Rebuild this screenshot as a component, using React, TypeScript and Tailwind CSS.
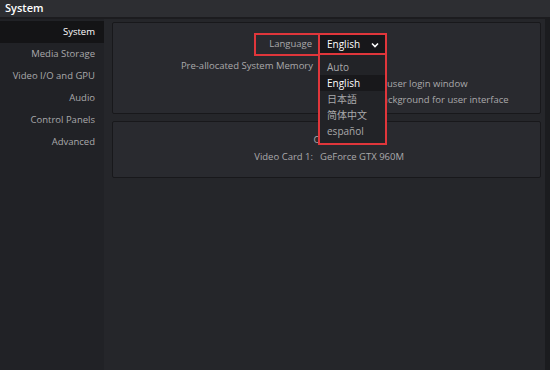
const menu = ['System', 'Media Storage', 'Video I/O and GPU', 'Audio', 'Control Panels', 'Advanced'];
const languages = ['Auto', 'English', '日本語', '简体中文', 'español'];

const font = { fontFamily: '"Open Sans", "Noto Sans CJK SC", sans-serif' };

export default function App() {
  return (
    <div
      className="w-[550px] h-[370px] bg-[#25262a] flex flex-col overflow-hidden text-[9.5px] text-[#a9a9ab]"
      style={font}
    >
      <div className="h-[19px] shrink-0 bg-[#2d2e32] px-[5px] flex items-center text-[11px] font-semibold text-white border-b-2 border-[#1c1c1f]">
        System
      </div>
      <div className="flex flex-1">
        <div className="w-[104px] shrink-0 bg-[#212226] pt-[2px] flex flex-col">
          {menu.map((m, i) => (
            <div
              key={m}
              className={
                'h-[22px] pr-[9px] flex items-center justify-end text-[9.5px] ' +
                (i === 0 ? 'bg-[#141416] text-white' : '')
              }
            >
              {m}
            </div>
          ))}
        </div>
        <div className="flex-1 flex">
          <div className="flex-1 pl-[8px] pr-[4px] pt-[3px] flex flex-col gap-[7px]">
            <div className="relative h-[92px] bg-[#292a2f] border border-[#18181b] rounded-[2px] pt-[10px]">
              <div className="flex items-center h-[23px] pl-[141px]">
                <div className="h-[23px] w-[133px] border-2 border-[#e0363b] flex items-center">
                  <span className="flex-1 text-right pr-[6px]">Language</span>
                  <div className="h-[23px] w-[69px] -mr-[2px] border-2 border-[#e0363b] bg-[#17171a] flex items-center pl-[7px] pr-[6px] text-white text-[10px]">
                    <span className="flex-1">English</span>
                    <svg width="8" height="6" viewBox="0 0 8 6" fill="none" stroke="#fff" strokeWidth="1.6">
                      <path d="M1 1.5 L4 4.5 L7 1.5" />
                    </svg>
                  </div>
                </div>
              </div>
              <div className="flex items-center h-[20px]">
                <div className="w-[200px] text-right">Pre-allocated System Memory</div>
              </div>
              <div className="flex items-center h-[16px]">
                <div className="w-[208px]" />
                <span className="inline-block w-[9px] h-[9px] bg-[#1a1a1d] border border-[#3a3b40] mr-[6px]" />
                <span>Prompt for user login window</span>
              </div>
              <div className="flex items-center h-[16px]">
                <div className="w-[208px]" />
                <span className="inline-block w-[9px] h-[9px] bg-[#1a1a1d] border border-[#3a3b40] mr-[6px]" />
                <span>Use gray background for user interface</span>
              </div>
              <div className="absolute left-[205px] top-[30px] w-[69px] border-2 border-[#e0363b] bg-[#222327] z-10 pt-[4px] pb-[4px] text-[#a9a9ab] text-[10px]">
                {languages.map((l, i) => (
                  <div
                    key={l}
                    className={
                      'h-[16px] flex items-center pl-[7px] ' +
                      (i === 1 ? 'bg-[#18181b] text-white' : '')
                    }
                  >
                    {l}
                  </div>
                ))}
              </div>
            </div>
            <div className="h-[57px] bg-[#292a2f] border border-[#18181b] rounded-[2px] flex flex-col items-center pt-[10px]">
              <div className="h-[16px] flex items-center">CUDA</div>
              <div className="self-stretch flex items-center h-[18px]">
                <div className="w-[200px] text-right">Video Card 1:</div>
                <div className="pl-[7px]">GeForce GTX 960M</div>
              </div>
            </div>
          </div>
          <div className="w-[5px] bg-[#1b1c1f]" />
        </div>
      </div>
    </div>
  );
}
